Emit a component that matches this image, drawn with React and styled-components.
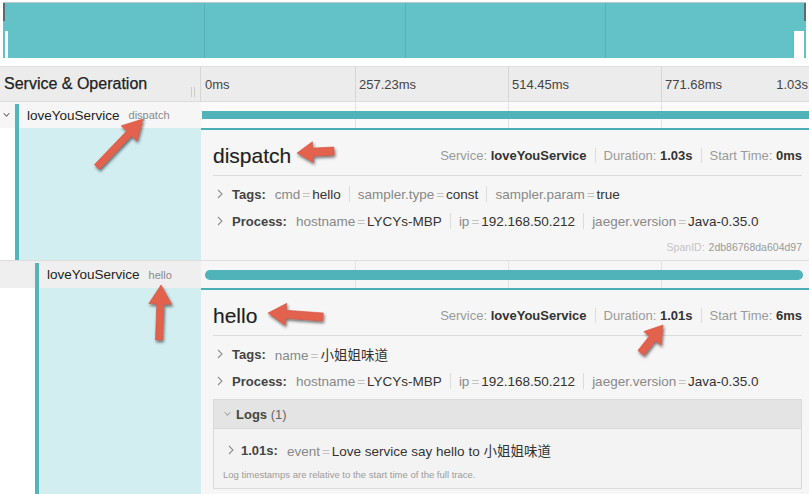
import React from "react";
import styled, { createGlobalStyle } from "styled-components";

const TEAL = "#52b5ba";
const BAR = "#4fb3b9";
const CYAN = "#d2eef1";

const Global = createGlobalStyle`
  html, body { margin: 0; padding: 0; background: #fff; }
  body { font-family: "Liberation Sans", Arial, "Noto Sans CJK SC", sans-serif; color: #222; }
  * { box-sizing: border-box; }
`;

const Page = styled.div`
  position: relative;
  width: 809px;
  height: 494px;
  overflow: hidden;
  background: #fff;
  padding-top: 2px;
`;

const Minimap = styled.div`
  position: relative;
  margin: 0 3px;
  height: 56px;
  background: #63c2c7;
  border-top: 1px solid #b9c9ca;
  display: grid;
  grid-template-columns: repeat(4, 1fr);
`;

const MinimapCell = styled.div`
  border-left: ${(p) => (p.$first ? "none" : "1px solid #57b2b7")};
`;

const Handle = styled.div`
  position: absolute;
  top: ${(p) => p.$top}px;
  bottom: ${(p) => (p.$bottom === undefined ? "auto" : `${p.$bottom}px`)};
  height: ${(p) => (p.$h ? `${p.$h}px` : "auto")};
  width: ${(p) => p.$w}px;
  left: ${(p) => (p.$left === undefined ? "auto" : `${p.$left}px`)};
  right: ${(p) => (p.$right === undefined ? "auto" : `${p.$right}px`)};
  background: ${(p) => p.$color};
`;

const HeaderRow = styled.div`
  margin-top: 8px;
  height: 36px;
  display: grid;
  grid-template-columns: 201px 1fr;
  background: #ececec;
  border-top: 1px solid #dedede;
  border-bottom: 1px solid #dcdcdc;
`;

const HeaderTitle = styled.div`
  position: relative;
  display: flex;
  align-items: center;
  padding-left: 4px;
  font-size: 16px;
  font-weight: 500;
  color: #222;
  -webkit-text-stroke: 0.25px #222;
  border-right: 1px solid #d6d6d6;
`;

const ResizeGrip = styled.div`
  position: absolute;
  right: 5px;
  top: 20px;
  width: 4px;
  height: 10px;
  border-left: 1px solid #ccc;
  border-right: 1px solid #ccc;
`;

const TickGrid = styled.div`
  position: relative;
  display: grid;
  grid-template-columns: 154px 153px 153px 1fr;
  background: ${(p) => p.$bg || "transparent"};
`;

const TickCell = styled.div`
  display: flex;
  align-items: center;
  justify-content: space-between;
  padding: 0 1px 0 ${(p) => (p.$first ? 4 : 3)}px;
  border-left: ${(p) => (p.$first ? "none" : `1px solid ${p.$line}`)};
  font-size: 13px;
  color: #444;
`;

const SpanRowWrap = styled.div`
  display: grid;
  grid-template-columns: 201px 1fr;
  height: ${(p) => p.$h}px;
  border-top: ${(p) => (p.$borderTop ? "1px solid #dedede" : "none")};
`;

const LabelCell = styled.div`
  display: flex;
  align-items: stretch;
  background: ${(p) => p.$bg};
`;

const Indent = styled.div`
  width: ${(p) => p.$w}px;
  flex: none;
  display: flex;
  align-items: center;
  padding-left: 3px;
  background: ${(p) => p.$bg || "transparent"};
`;

const ServiceBar = styled.div`
  width: 4px;
  flex: none;
  margin-top: ${(p) => p.$top || 0}px;
  background: ${TEAL};
`;

const ServiceName = styled.div`
  display: flex;
  align-items: center;
  padding-left: 8px;
  font-size: 13.5px;
  color: #222;
  white-space: nowrap;
`;

const OpName = styled.span`
  margin-left: 9px;
  font-size: 11px;
  color: #8a8a8a;
`;

const SpanBar = styled.div`
  position: absolute;
  top: 50%;
  transform: translateY(-50%);
  height: ${(p) => p.$h}px;
  border-radius: ${(p) => p.$r}px;
  background: ${BAR};
`;

const DetailRow = styled.div`
  display: grid;
  grid-template-columns: 201px 1fr;
`;

const DetailLeft = styled.div`
  display: flex;
  align-items: stretch;
`;

const Cyan = styled.div`
  flex: 1;
  background: ${CYAN};
`;

const Panel = styled.div`
  background: #f6f6f6;
  border-top: 2px solid #4aafb5;
  padding: 0 7px 6px 12px;
`;

const HeadingRow = styled.div`
  height: 46px;
  padding-top: 6px;
  display: flex;
  align-items: center;
  justify-content: space-between;
  border-bottom: 1px solid #dcdcdc;
`;

const OpTitle = styled.div`
  font-size: 21px;
  color: #1f1f1f;
  -webkit-text-stroke: 0.15px #1f1f1f;
`;

const Meta = styled.div`
  display: flex;
  align-items: center;
  font-size: 13px;
  color: #9a9a9a;
  white-space: nowrap;
`;

const Strong = styled.b`
  color: #333;
  font-weight: 700;
`;

const VSep = styled.span`
  display: inline-block;
  width: 1px;
  height: ${(p) => p.$h || 15}px;
  margin: 0 8px;
  background: #dcdcdc;
`;

const AttrRow = styled.div`
  display: flex;
  align-items: center;
  height: 20px;
  margin-top: ${(p) => p.$mt}px;
  padding-left: ${(p) => p.$pl || 4}px;
  font-size: 13px;
  white-space: nowrap;
`;

const AttrLabel = styled.b`
  margin-left: ${(p) => p.$ml || 9}px;
  color: #444;
  font-weight: 700;
`;

const KVList = styled.div`
  display: flex;
  align-items: center;
  margin-left: 9px;
  font-size: 13.5px;
`;

const Key = styled.span`
  color: #888;
`;

const Eq = styled.span`
  color: #c2c2c2;
  margin: 0 2px;
`;

const Val = styled.span`
  color: #333;
`;

const SpanIdRow = styled.div`
  display: flex;
  justify-content: flex-end;
  align-items: center;
  height: 14px;
  margin-top: 9px;
  font-size: 10.5px;
  color: #c4c4c4;
`;

const SpanIdValue = styled.span`
  margin-left: 4px;
  color: #9a9a9a;
`;

const LogsBox = styled.div`
  margin-top: 8px;
  border: 1px solid #dadada;
`;

const LogsHeader = styled.div`
  height: 28px;
  display: flex;
  align-items: center;
  padding-left: 10px;
  background: #e4e4e4;
  font-size: 13px;
  color: #666;
`;

const LogsBody = styled.div`
  background: #f3f3f3;
  border-top: 1px solid #dadada;
  padding: 11px 9px 7px 9px;
`;

const Footnote = styled.div`
  margin-top: 8px;
  font-size: 9.5px;
  line-height: 13px;
  color: #9b9b9b;
`;

const Overlay = styled.svg`
  position: absolute;
  left: 0;
  top: 0;
  width: 809px;
  height: 494px;
  pointer-events: none;
`;

const ChevronRight = () => (
  <svg width="6" height="10" viewBox="0 0 6 10">
    <polyline points="1,1 5,5 1,9" fill="none" stroke="#8f8f8f" strokeWidth="1.1" />
  </svg>
);

const ChevronDown = ({ color = "#8f8f8f", w = 8 }) => (
  <svg width={w} height="6" viewBox="0 0 8 6">
    <polyline points="1,1 4,4.5 7,1" fill="none" stroke={color} strokeWidth="1.1" />
  </svg>
);

const KV = ({ k, v }) => (
  <span>
    <Key>{k}</Key>
    <Eq>=</Eq>
    <Val>{v}</Val>
  </span>
);

const KVs = ({ items }) => (
  <KVList>
    {items.map(([k, v], i) => (
      <React.Fragment key={k}>
        {i > 0 && <VSep $h={16} />}
        <KV k={k} v={v} />
      </React.Fragment>
    ))}
  </KVList>
);

const Ticks = ({ line, bg, labels, children }) => (
  <TickGrid $bg={bg}>
    {[0, 1, 2, 3].map((i) => (
      <TickCell key={i} $first={i === 0} $line={line}>
        {labels ? (
          <>
            <span>{labels[i]}</span>
            {i === 3 && <span>{labels[4]}</span>}
          </>
        ) : null}
      </TickCell>
    ))}
    {children}
  </TickGrid>
);

function arrowPoints(tail, tip, w, hl, hw) {
  const dx = tip[0] - tail[0];
  const dy = tip[1] - tail[1];
  const len = Math.hypot(dx, dy);
  const ux = dx / len;
  const uy = dy / len;
  const nx = -uy;
  const ny = ux;
  const bx = tip[0] - ux * hl;
  const by = tip[1] - uy * hl;
  const p = [
    [tail[0] + (nx * w) / 2, tail[1] + (ny * w) / 2],
    [bx + (nx * w) / 2, by + (ny * w) / 2],
    [bx + (nx * hw) / 2, by + (ny * hw) / 2],
    tip,
    [bx - (nx * hw) / 2, by - (ny * hw) / 2],
    [bx - (nx * w) / 2, by - (ny * w) / 2],
    [tail[0] - (nx * w) / 2, tail[1] - (ny * w) / 2],
  ];
  return p.map((q) => q.map((n) => n.toFixed(1)).join(",")).join(" ");
}

const arrows = [
  { tail: [97, 167], tip: [143, 119], w: 7, hl: 20, hw: 22 },
  { tail: [334, 151], tip: [297, 153], w: 8, hl: 16, hw: 21 },
  { tail: [159, 340], tip: [161, 285], w: 7, hl: 19, hw: 23 },
  { tail: [323, 317], tip: [268, 313], w: 8, hl: 18, hw: 22 },
  { tail: [641, 353], tip: [663, 325], w: 8, hl: 17, hw: 22 },
];

const Annotations = () => (
  <Overlay viewBox="0 0 809 494">
    <defs>
      <filter id="shadow" x="-30%" y="-30%" width="160%" height="160%">
        <feDropShadow dx="1" dy="2" stdDeviation="1.4" floodColor="#000" floodOpacity="0.55" />
      </filter>
    </defs>
    {arrows.map((a, i) => (
      <polygon
        key={i}
        points={arrowPoints(a.tail, a.tip, a.w, a.hl, a.hw)}
        fill="#e2624e"
        stroke="#d1533f"
        strokeWidth="0.6"
        strokeLinejoin="round"
        filter="url(#shadow)"
      />
    ))}
  </Overlay>
);

const spans = [
  {
    op: "dispatch",
    indent: 15,
    rowH: 26,
    rowBg: "#f6f6f6",
    timeBg: "#fbfbfb",
    borderTop: false,
    bar: { left: 1, width: 607, h: 8, r: 0 },
    meta: { duration: "1.03s", start: "0ms" },
    tags: [
      ["cmd", "hello"],
      ["sampler.type", "const"],
      ["sampler.param", "true"],
    ],
    spanId: "2db86768da604d97",
    logs: null,
  },
  {
    op: "hello",
    indent: 35,
    rowH: 28,
    rowBg: "#efefef",
    timeBg: "#f6f6f6",
    borderTop: true,
    bar: { left: 4, width: 598, h: 10, r: 5 },
    meta: { duration: "1.01s", start: "6ms" },
    tags: [["name", "小姐姐味道"]],
    spanId: null,
    logs: { time: "1.01s", kv: ["event", "Love service say hello to 小姐姐味道"] },
  },
];

const processTags = [
  ["hostname", "LYCYs-MBP"],
  ["ip", "192.168.50.212"],
  ["jaeger.version", "Java-0.35.0"],
];

const SpanBlock = ({ s, first }) => (
  <>
    <SpanRowWrap $h={s.rowH} $borderTop={s.borderTop}>
      <LabelCell $bg={s.rowBg}>
        <Indent $w={s.indent}>{first && <ChevronDown color="#333" w={7} />}</Indent>
        <ServiceBar $top={2} />
        <ServiceName>
          loveYouService
          <OpName>{s.op}</OpName>
        </ServiceName>
      </LabelCell>
      <Ticks line="#e3e3e3" bg={s.timeBg}>
        <SpanBar
          $h={s.bar.h}
          $r={s.bar.r}
          style={{ left: s.bar.left, width: s.bar.width }}
        />
      </Ticks>
    </SpanRowWrap>
    <DetailRow>
      <DetailLeft>
        <Indent $w={s.indent} $bg="#fff" />
        <ServiceBar />
        <Cyan />
      </DetailLeft>
      <Panel>
        <HeadingRow>
          <OpTitle>{s.op}</OpTitle>
          <Meta>
            Service:&nbsp;<Strong>loveYouService</Strong>
            <VSep />
            Duration:&nbsp;<Strong>{s.meta.duration}</Strong>
            <VSep />
            Start Time:&nbsp;<Strong>{s.meta.start}</Strong>
          </Meta>
        </HeadingRow>
        <AttrRow $mt={8}>
          <ChevronRight />
          <AttrLabel>Tags:</AttrLabel>
          <KVs items={s.tags} />
        </AttrRow>
        <AttrRow $mt={7}>
          <ChevronRight />
          <AttrLabel>Process:</AttrLabel>
          <KVs items={processTags} />
        </AttrRow>
        {s.spanId && (
          <SpanIdRow>
            SpanID:<SpanIdValue>{s.spanId}</SpanIdValue>
          </SpanIdRow>
        )}
        {s.logs && (
          <LogsBox>
            <LogsHeader>
              <ChevronDown w={7} />
              <AttrLabel $ml={5}>Logs</AttrLabel>
              &nbsp;(1)
            </LogsHeader>
            <LogsBody>
              <AttrRow $mt={0} $pl={5}>
                <ChevronRight />
                <AttrLabel $ml={7}>{s.logs.time}:</AttrLabel>
                <KVs items={[s.logs.kv]} />
              </AttrRow>
              <Footnote>Log timestamps are relative to the start time of the full trace.</Footnote>
            </LogsBody>
          </LogsBox>
        )}
      </Panel>
    </DetailRow>
  </>
);

export default function App() {
  return (
    <>
      <Global />
      <Page>
        <Minimap>
          {[0, 1, 2, 3].map((i) => (
            <MinimapCell key={i} $first={i === 0} />
          ))}
          <Handle $left={0} $top={0} $h={18} $w={2} $color="#5d6b6c" />
          <Handle $left={2} $top={28} $bottom={0} $w={3} $color="#fff" />
          <Handle $right={2} $top={28} $bottom={0} $w={10} $color="#fff" />
          <Handle $right={0} $top={0} $h={18} $w={2} $color="#5d6b6c" />
        </Minimap>
        <HeaderRow>
          <HeaderTitle>
            Service &amp; Operation
            <ResizeGrip />
          </HeaderTitle>
          <Ticks line="#d6d6d6" labels={["0ms", "257.23ms", "514.45ms", "771.68ms", "1.03s"]} />
        </HeaderRow>
        {spans.map((s, i) => (
          <SpanBlock key={s.op} s={s} first={i === 0} />
        ))}
        <Annotations />
      </Page>
    </>
  );
}
